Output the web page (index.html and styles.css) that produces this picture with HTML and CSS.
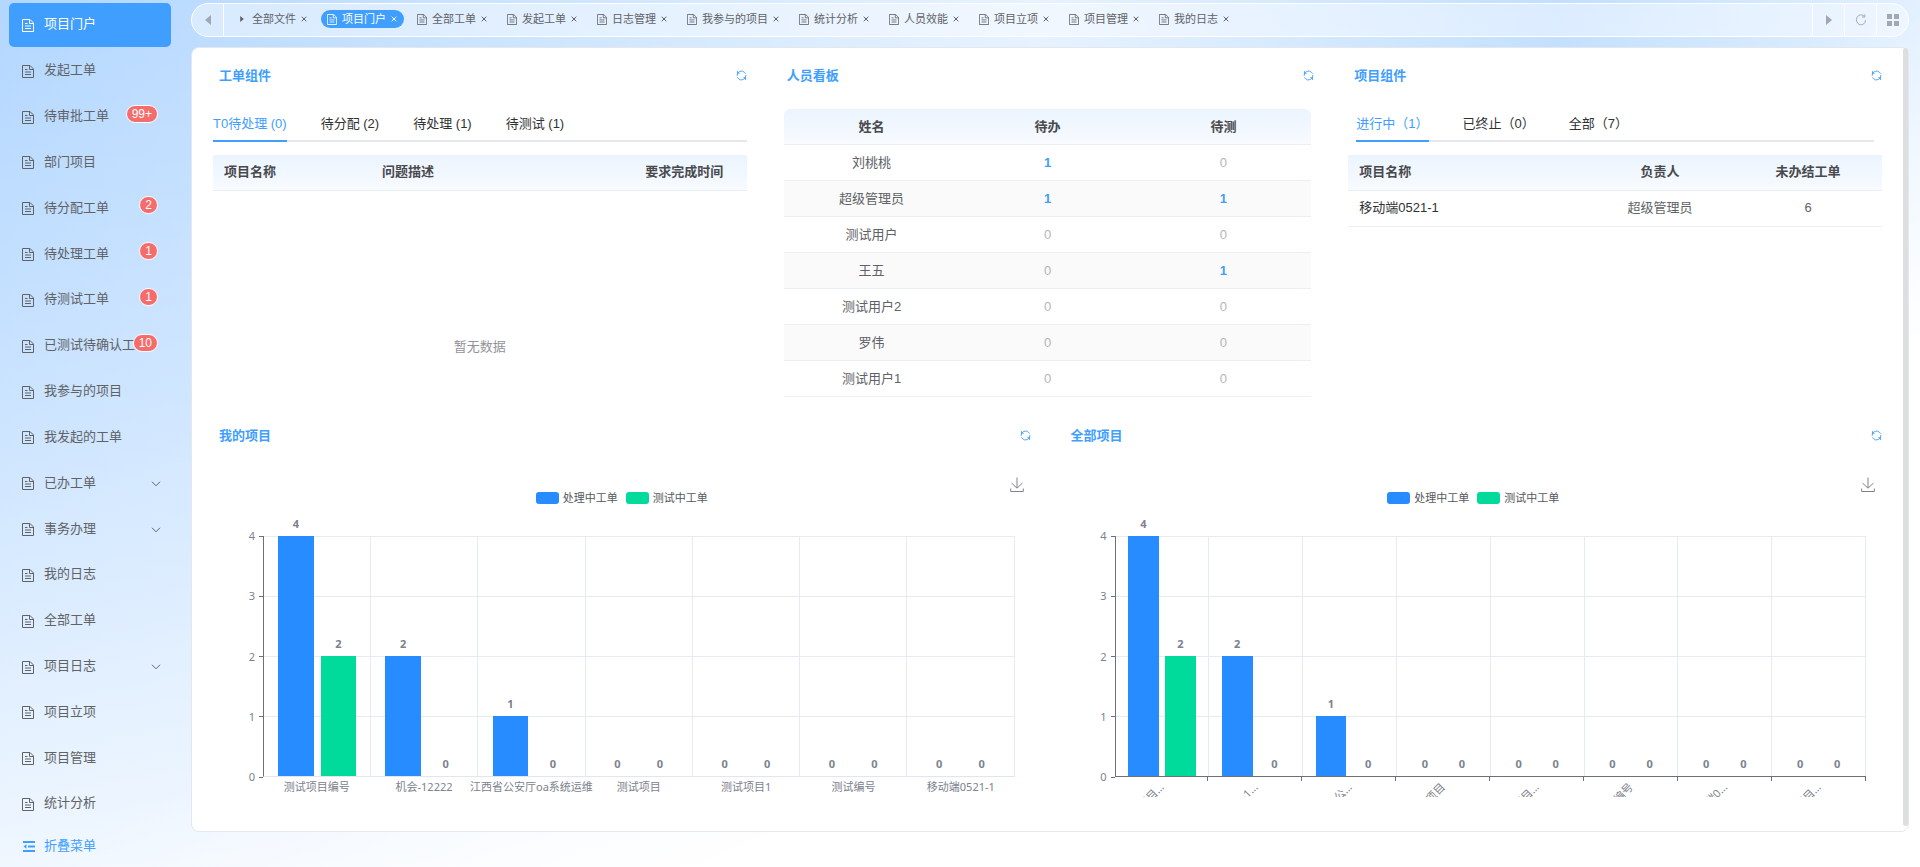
FILE: index.html
```html
<!DOCTYPE html>
<html lang="zh-CN">
<head>
    <meta charset="UTF-8">
    <meta name="viewport" content="width=device-width, initial-scale=1.0">
    <title>项目门户</title>
    <link rel="stylesheet" href="styles.css">
</head>
<body>
    <!-- 图标 -->
    <svg class="sprite" aria-hidden="true">
        <symbol id="i-doc" viewBox="0 0 12 13">
            <path d="M.5 .5H8L11.5 4V12.5H.5Z M7.5 .5V4.5H11.5 M3 4.5H5.5 M3 7H9 M3 9.5H9" fill="none" stroke="currentColor"/>
        </symbol>
        <symbol id="i-refresh" viewBox="0 0 12 12">
            <path d="M1.2 6.5A4.8 4.8 0 0 1 9.5 2.7L10.6 4 M10.8 5.5A4.8 4.8 0 0 1 2.5 9.3L1.4 8 M1.6 1.2V3.6H4 M10.4 10.8V8.4H8" fill="none" stroke="currentColor"/>
        </symbol>
        <symbol id="i-down" viewBox="0 0 10 6">
            <path d="M1 .8L5 4.8L9 .8" fill="none" stroke="currentColor"/>
        </symbol>
        <symbol id="i-close" viewBox="0 0 6 6">
            <path d="M.7 .7L5.3 5.3M5.3 .7L.7 5.3" fill="none" stroke="currentColor"/>
        </symbol>
        <symbol id="i-caret" viewBox="0 0 6 10">
            <path d="M0 0L6 5L0 10Z" fill="currentColor"/>
        </symbol>
        <symbol id="i-fold" viewBox="0 0 12 11">
            <path d="M0 0H12V2H0Z M5 4.5H12V6.5H5Z M0 9H12V11H0Z M3.5 3.2V7.8L.5 5.5Z" fill="currentColor"/>
        </symbol>
        <symbol id="i-reload" viewBox="0 0 12 12">
            <path d="M9.2 2.2A4.6 5 0 1 0 10.6 6.2 M9.8 .3V3H7" fill="none" stroke="currentColor"/>
        </symbol>
        <symbol id="i-grid" viewBox="0 0 12 12">
            <path d="M0 0H5V5H0Z M7 0H12V5H7Z M0 7H5V12H0Z M7 7H12V12H7Z" fill="currentColor"/>
        </symbol>
        <symbol id="i-download" viewBox="0 0 14 16">
            <path d="M7 .5V11 M1.5 6L7 11.2L12.5 6 M.7 11.5V14.5H13.3V11.5" fill="none" stroke="currentColor"/>
        </symbol>
    </svg>

    <aside class="sidebar">
        <nav class="menu">
            <a class="menu-item active" href="#"><svg><use href="#i-doc"/></svg><span>项目门户</span></a>
            <a class="menu-item" href="#"><svg><use href="#i-doc"/></svg><span>发起工单</span></a>
            <a class="menu-item" href="#"><svg><use href="#i-doc"/></svg><span>待审批工单</span><em class="badge">99+</em></a>
            <a class="menu-item" href="#"><svg><use href="#i-doc"/></svg><span>部门项目</span></a>
            <a class="menu-item" href="#"><svg><use href="#i-doc"/></svg><span>待分配工单</span><em class="badge">2</em></a>
            <a class="menu-item" href="#"><svg><use href="#i-doc"/></svg><span>待处理工单</span><em class="badge">1</em></a>
            <a class="menu-item" href="#"><svg><use href="#i-doc"/></svg><span>待测试工单</span><em class="badge">1</em></a>
            <a class="menu-item" href="#"><svg><use href="#i-doc"/></svg><span>已测试待确认工...</span><em class="badge">10</em></a>
            <a class="menu-item" href="#"><svg><use href="#i-doc"/></svg><span>我参与的项目</span></a>
            <a class="menu-item" href="#"><svg><use href="#i-doc"/></svg><span>我发起的工单</span></a>
            <a class="menu-item" href="#"><svg><use href="#i-doc"/></svg><span>已办工单</span><svg class="arrow"><use href="#i-down"/></svg></a>
            <a class="menu-item" href="#"><svg><use href="#i-doc"/></svg><span>事务办理</span><svg class="arrow"><use href="#i-down"/></svg></a>
            <a class="menu-item" href="#"><svg><use href="#i-doc"/></svg><span>我的日志</span></a>
            <a class="menu-item" href="#"><svg><use href="#i-doc"/></svg><span>全部工单</span></a>
            <a class="menu-item" href="#"><svg><use href="#i-doc"/></svg><span>项目日志</span><svg class="arrow"><use href="#i-down"/></svg></a>
            <a class="menu-item" href="#"><svg><use href="#i-doc"/></svg><span>项目立项</span></a>
            <a class="menu-item" href="#"><svg><use href="#i-doc"/></svg><span>项目管理</span></a>
            <a class="menu-item" href="#"><svg><use href="#i-doc"/></svg><span>统计分析</span></a>
        </nav>
        <button class="fold" type="button"><svg><use href="#i-fold"/></svg><span>折叠菜单</span></button>
    </aside>

    <main class="main">
        <!-- 页签栏 -->
        <div class="tabbar">
            <button class="bar-btn prev" type="button" aria-label="向左"><svg class="flip"><use href="#i-caret"/></svg></button>
            <nav class="page-tabs">
                <a class="page-tab" href="#"><svg class="small"><use href="#i-caret"/></svg><span>全部文件</span><svg class="close"><use href="#i-close"/></svg></a>
                <a class="page-tab active" href="#"><svg><use href="#i-doc"/></svg><span>项目门户</span><svg class="close"><use href="#i-close"/></svg></a>
                <a class="page-tab" href="#"><svg><use href="#i-doc"/></svg><span>全部工单</span><svg class="close"><use href="#i-close"/></svg></a>
                <a class="page-tab" href="#"><svg><use href="#i-doc"/></svg><span>发起工单</span><svg class="close"><use href="#i-close"/></svg></a>
                <a class="page-tab" href="#"><svg><use href="#i-doc"/></svg><span>日志管理</span><svg class="close"><use href="#i-close"/></svg></a>
                <a class="page-tab" href="#"><svg><use href="#i-doc"/></svg><span>我参与的项目</span><svg class="close"><use href="#i-close"/></svg></a>
                <a class="page-tab" href="#"><svg><use href="#i-doc"/></svg><span>统计分析</span><svg class="close"><use href="#i-close"/></svg></a>
                <a class="page-tab" href="#"><svg><use href="#i-doc"/></svg><span>人员效能</span><svg class="close"><use href="#i-close"/></svg></a>
                <a class="page-tab" href="#"><svg><use href="#i-doc"/></svg><span>项目立项</span><svg class="close"><use href="#i-close"/></svg></a>
                <a class="page-tab" href="#"><svg><use href="#i-doc"/></svg><span>项目管理</span><svg class="close"><use href="#i-close"/></svg></a>
                <a class="page-tab" href="#"><svg><use href="#i-doc"/></svg><span>我的日志</span><svg class="close"><use href="#i-close"/></svg></a>
            </nav>
            <button class="bar-btn" type="button" aria-label="向右"><svg class="caret"><use href="#i-caret"/></svg></button>
            <button class="bar-btn" type="button" aria-label="刷新"><svg><use href="#i-reload"/></svg></button>
            <button class="bar-btn" type="button" aria-label="更多"><svg><use href="#i-grid"/></svg></button>
        </div>

        <div class="card">
            <div class="row row-top">
                <section class="panel">
                    <header class="panel-head">
                        <h2>工单组件</h2>
                        <button class="refresh" type="button" aria-label="刷新"><svg><use href="#i-refresh"/></svg></button>
                    </header>
                    <div class="tabs">
                        <button class="tab active" type="button">T0待处理 (0)</button>
                        <button class="tab" type="button">待分配 (2)</button>
                        <button class="tab" type="button">待处理 (1)</button>
                        <button class="tab" type="button">待测试 (1)</button>
                    </div>
                    <table class="orders">
                        <thead>
                            <tr><th class="col-name">项目名称</th><th>问题描述</th><th class="col-time">要求完成时间</th></tr>
                        </thead>
                    </table>
                    <p class="empty">暂无数据</p>
                </section>

                <section class="panel">
                    <header class="panel-head">
                        <h2>人员看板</h2>
                        <button class="refresh" type="button" aria-label="刷新"><svg><use href="#i-refresh"/></svg></button>
                    </header>
                    <div class="board">
                        <table class="staff">
                            <thead>
                                <tr><th>姓名</th><th>待办</th><th>待测</th></tr>
                            </thead>
                            <tbody>
                                <tr><td>刘桃桃</td><td class="num">1</td><td class="zero">0</td></tr>
                                <tr><td>超级管理员</td><td class="num">1</td><td class="num">1</td></tr>
                                <tr><td>测试用户</td><td class="zero">0</td><td class="zero">0</td></tr>
                                <tr><td>王五</td><td class="zero">0</td><td class="num">1</td></tr>
                                <tr><td>测试用户2</td><td class="zero">0</td><td class="zero">0</td></tr>
                                <tr><td>罗伟</td><td class="zero">0</td><td class="zero">0</td></tr>
                                <tr><td>测试用户1</td><td class="zero">0</td><td class="zero">0</td></tr>
                            </tbody>
                        </table>
                    </div>
                </section>

                <section class="panel">
                    <header class="panel-head">
                        <h2>项目组件</h2>
                        <button class="refresh" type="button" aria-label="刷新"><svg><use href="#i-refresh"/></svg></button>
                    </header>
                    <div class="tabs inset">
                        <button class="tab active" type="button">进行中（1）</button>
                        <button class="tab" type="button">已终止（0）</button>
                        <button class="tab" type="button">全部（7）</button>
                    </div>
                    <table class="projects">
                        <thead>
                            <tr><th>项目名称</th><th class="col-owner">负责人</th><th class="col-count">未办结工单</th></tr>
                        </thead>
                        <tbody>
                            <tr><td class="name">移动端0521-1</td><td>超级管理员</td><td>6</td></tr>
                        </tbody>
                    </table>
                </section>
            </div>

            <div class="row">
                <section class="panel">
                    <header class="panel-head">
                        <h2>我的项目</h2>
                        <button class="refresh" type="button" aria-label="刷新"><svg><use href="#i-refresh"/></svg></button>
                    </header>
                    <div class="chart">
                        <button class="download" type="button" aria-label="下载"><svg><use href="#i-download"/></svg></button>
                        <div class="legend">
                            <span class="key blue"></span><span>处理中工单</span>
                            <span class="key green"></span><span>测试中工单</span>
                        </div>
                        <div class="chart-body">
                            <div class="y-axis"><span>4</span><span>3</span><span>2</span><span>1</span><span>0</span></div>
                            <div class="plot">
                                <div class="cat">
                                    <div class="bar blue"><b>4</b><i style="height: 100%"></i></div>
                                    <div class="bar green"><b>2</b><i style="height: 50%"></i></div>
                                </div>
                                <div class="cat">
                                    <div class="bar blue"><b>2</b><i style="height: 50%"></i></div>
                                    <div class="bar green"><b>0</b><i style="height: 0%"></i></div>
                                </div>
                                <div class="cat">
                                    <div class="bar blue"><b>1</b><i style="height: 25%"></i></div>
                                    <div class="bar green"><b>0</b><i style="height: 0%"></i></div>
                                </div>
                                <div class="cat"><div class="bar blue"><b>0</b></div><div class="bar green"><b>0</b></div></div>
                                <div class="cat"><div class="bar blue"><b>0</b></div><div class="bar green"><b>0</b></div></div>
                                <div class="cat"><div class="bar blue"><b>0</b></div><div class="bar green"><b>0</b></div></div>
                                <div class="cat"><div class="bar blue"><b>0</b></div><div class="bar green"><b>0</b></div></div>
                            </div>
                        </div>
                        <div class="x-axis">
                            <div><span>测试项目编号</span></div>
                            <div><span>机会-12222</span></div>
                            <div><span>江西省公安厅oa系统运维</span></div>
                            <div><span>测试项目</span></div>
                            <div><span>测试项目1</span></div>
                            <div><span>测试编号</span></div>
                            <div><span>移动端0521-1</span></div>
                        </div>
                    </div>
                </section>

                <section class="panel">
                    <header class="panel-head">
                        <h2>全部项目</h2>
                        <button class="refresh" type="button" aria-label="刷新"><svg><use href="#i-refresh"/></svg></button>
                    </header>
                    <div class="chart">
                        <button class="download" type="button" aria-label="下载"><svg><use href="#i-download"/></svg></button>
                        <div class="legend">
                            <span class="key blue"></span><span>处理中工单</span>
                            <span class="key green"></span><span>测试中工单</span>
                        </div>
                        <div class="chart-body">
                            <div class="y-axis"><span>4</span><span>3</span><span>2</span><span>1</span><span>0</span></div>
                            <div class="plot lined">
                                <div class="cat">
                                    <div class="bar blue"><b>4</b><i style="height: 100%"></i></div>
                                    <div class="bar green"><b>2</b><i style="height: 50%"></i></div>
                                </div>
                                <div class="cat">
                                    <div class="bar blue"><b>2</b><i style="height: 50%"></i></div>
                                    <div class="bar green"><b>0</b><i style="height: 0%"></i></div>
                                </div>
                                <div class="cat">
                                    <div class="bar blue"><b>1</b><i style="height: 25%"></i></div>
                                    <div class="bar green"><b>0</b><i style="height: 0%"></i></div>
                                </div>
                                <div class="cat"><div class="bar blue"><b>0</b></div><div class="bar green"><b>0</b></div></div>
                                <div class="cat"><div class="bar blue"><b>0</b></div><div class="bar green"><b>0</b></div></div>
                                <div class="cat"><div class="bar blue"><b>0</b></div><div class="bar green"><b>0</b></div></div>
                                <div class="cat"><div class="bar blue"><b>0</b></div><div class="bar green"><b>0</b></div></div>
                                <div class="cat"><div class="bar blue"><b>0</b></div><div class="bar green"><b>0</b></div></div>
                            </div>
                        </div>
                        <div class="x-axis rotated">
                            <div><span>测试项目...</span></div>
                            <div><span>机会-1...</span></div>
                            <div><span>江西省公...</span></div>
                            <div><span>测试项目</span></div>
                            <div><span>测试项目...</span></div>
                            <div><span>测试编号</span></div>
                            <div><span>移动端0...</span></div>
                            <div><span>测试项目...</span></div>
                        </div>
                    </div>
                </section>
            </div>
            <div class="scrollbar"></div>
        </div>
    </main>
</body>
</html>
```
FILE: styles.css
```css
* {
    box-sizing: border-box;
    margin: 0;
    padding: 0;
}

body {
    display: flex;
    height: 100vh;
    overflow: hidden;
    font-family: "Liberation Sans", "Noto Sans CJK SC", sans-serif;
    font-size: 13px;
    line-height: 16px;
    color: #606266;
    background:
        linear-gradient(to bottom right, rgba(255, 255, 255, 0) 50%, #fff 70%),
        linear-gradient(to bottom, rgba(255, 255, 255, 0), rgba(255, 255, 255, 0.3) 45%, rgba(255, 255, 255, 0.8)),
        linear-gradient(to right, #b3d7ff 0%, #bddcff 12%, #e6f2ff 54%, #c2dfff 81%, #e2f0ff 100%);
}

button {
    border: none;
    background: none;
    font: inherit;
    color: inherit;
    cursor: pointer;
}

a {
    color: inherit;
    text-decoration: none;
}

svg {
    display: block;
    flex: none;
}

.sprite {
    position: absolute;
    width: 0;
    height: 0;
}

/* 左侧菜单 */
.sidebar {
    display: flex;
    flex-direction: column;
    flex: none;
    width: 191px;
    padding: 2px 20px 2px 9px;
}

.menu {
    display: flex;
    flex: 1;
    flex-direction: column;
}

.menu-item {
    position: relative;
    display: flex;
    flex: 1;
    align-items: center;
    gap: 10px;
    margin: 1px 0;
    padding: 0 10px 1px 13px;
    border-radius: 5px;
    white-space: nowrap;
}

.menu-item svg {
    width: 12px;
    height: 13px;
    margin-top: 2px;
}

.menu-item .arrow {
    width: 10px;
    height: 6px;
    margin-left: auto;
}

.menu-item.active {
    color: #fff;
    background: #409eff;
}

.badge {
    position: absolute;
    top: 10px;
    right: 13px;
    min-width: 18px;
    height: 18px;
    padding: 0 5px;
    border: 1px solid #fff;
    border-radius: 9px;
    background: #f56c6c;
    color: #fff;
    font-size: 12px;
    font-style: normal;
    line-height: 16px;
    text-align: center;
}

.fold {
    display: flex;
    align-items: center;
    gap: 9px;
    height: 38px;
    padding-left: 14px;
    color: #409eff;
}

.fold svg {
    width: 12px;
    height: 11px;
}

.main {
    display: flex;
    flex: 1;
    flex-direction: column;
    min-width: 0;
    padding: 3px 11px 35px 0;
}

/* 页签栏 */
.tabbar {
    display: flex;
    flex: none;
    height: 34px;
    margin-bottom: 10px;
    border: 1px solid #fff;
    border-radius: 17px;
    background: rgba(255, 255, 255, 0.42);
}

.bar-btn {
    display: flex;
    align-items: center;
    justify-content: center;
    width: 32px;
    border-left: 1px solid #fff;
    color: #a3a8b0;
}

.bar-btn svg {
    width: 12px;
    height: 12px;
}

.bar-btn .caret,
.bar-btn .flip {
    width: 6px;
    height: 10px;
}

.bar-btn .flip {
    transform: rotate(180deg);
}

.bar-btn.prev {
    border-left: none;
    border-right: 1px solid #fff;
}

.page-tabs {
    display: flex;
    flex: 1;
    align-items: center;
    gap: 7px;
    padding: 0 7px 2px;
    overflow: hidden;
    font-size: 11px;
}

.page-tab {
    display: flex;
    flex: none;
    align-items: center;
    gap: 5px;
    height: 18px;
    padding: 0 7px 0 6px;
    border-radius: 9px;
}

.page-tab svg {
    width: 10px;
    height: 11px;
}

.page-tab .small {
    height: 6px;
}

.page-tab .close {
    width: 6px;
    height: 6px;
}

.page-tab.active {
    color: #fff;
    background: #409eff;
}

/* 内容区 */
.card {
    position: relative;
    flex: 1;
    padding: 0 26px 0 21px;
    border: 1px solid #e4e7ed;
    border-radius: 8px;
    background: #fff;
}

.scrollbar {
    position: absolute;
    top: 0;
    right: 0;
    bottom: 5px;
    width: 5px;
    border-radius: 3px;
    background: #dddee0;
}

.row {
    display: flex;
    gap: 34px;
}

.row-top {
    min-height: 360px;
}

.panel {
    flex: 1;
    min-width: 0;
}

.panel-head {
    display: flex;
    align-items: center;
    justify-content: space-between;
    height: 55px;
    padding: 0 0 0 6px;
    color: #409eff;
}

.panel-head h2 {
    font-size: 13px;
    font-weight: bold;
}

.refresh svg {
    width: 11px;
    height: 11px;
}

.tabs {
    display: flex;
    gap: 34px;
    margin: 4px 0 13px;
    border-bottom: 2px solid #e4e7ed;
    color: #303133;
}

.tabs.inset {
    margin-left: 8px;
    margin-right: 8px;
}

.tab {
    height: 35px;
    margin-bottom: -2px;
    padding-top: 1px;
    border-bottom: 2px solid transparent;
    white-space: nowrap;
}

.tab.active {
    color: #409eff;
    border-color: #409eff;
}

/* 表格 */
table {
    width: 100%;
    table-layout: fixed;
    border-collapse: separate;
    border-spacing: 0;
}

thead tr {
    background: linear-gradient(to bottom, #ebf4ff, #f8fbff);
}

th,
td {
    height: 36px;
    padding: 0 11px 2px;
    border-bottom: 1px solid #ebeef5;
    text-align: center;
    white-space: nowrap;
}

th {
    color: #48494c;
    font-weight: bold;
}

.orders th,
.projects th:first-child,
.projects td:first-child {
    text-align: left;
}

.orders .col-time {
    width: 125px;
    text-align: center;
}

.col-name {
    width: 158px;
}

.col-owner,
.col-count {
    width: 148px;
}

.projects .name {
    color: #303133;
}

.board {
    padding: 6px 3px 0;
}

.staff {
    overflow: hidden;
    border-radius: 6px 6px 0 0;
}

.staff th,
.staff td {
    padding-bottom: 0;
}

.staff tbody tr:nth-child(even) {
    background: #fafafa;
}

.num {
    color: #409eff;
    font-weight: bold;
}

.zero {
    color: #b4b6ba;
}

.empty {
    padding-top: 148px;
    color: #909399;
    text-align: center;
}

/* 柱状图 */
.chart {
    position: relative;
    overflow: hidden;
    padding: 27px 16px 0 0;
    color: #7c818c;
    font-family: "Noto Sans", "Noto Sans CJK SC", sans-serif;
    font-size: 11px;
}

.download {
    position: absolute;
    top: 14px;
    right: 7px;
    color: #808388;
}

.download svg {
    width: 14px;
    height: 16px;
}

.legend {
    display: flex;
    align-items: center;
    justify-content: center;
    gap: 4px;
    margin-bottom: 30px;
    padding-left: 16px;
    color: #55585e;
}

.key {
    width: 23px;
    height: 12px;
    border-radius: 3px;
}

.key.green {
    margin-left: 4px;
}

.blue {
    --bar: #268cff;
}

.green {
    --bar: #00db9c;
}

.key,
.bar i {
    background: var(--bar);
}

.chart-body {
    display: flex;
    height: 241px;
}

.y-axis {
    display: flex;
    flex: none;
    flex-direction: column;
    justify-content: space-between;
    width: 50px;
    margin: -8px 0;
}

.y-axis span {
    display: flex;
    align-items: center;
    justify-content: flex-end;
    gap: 4px;
}

.y-axis span::after {
    content: "";
    width: 4px;
    height: 1px;
    background: #6e7079;
}

.plot {
    display: flex;
    flex: 1;
    border-left: 1px solid #6e7079;
    border-bottom: 1px solid #e0e6f1;
    background: linear-gradient(#e6eaf3 1px, transparent 1px) 0 0 / 100% 60px;
}

.plot.lined {
    border-bottom-color: #6e7079;
}

.cat {
    display: grid;
    flex: 1;
    grid-template-columns: 2fr 5fr 1fr 5fr 2fr;
    border-right: 1px solid #e6eaf3;
}

.bar {
    display: flex;
    flex-direction: column;
    justify-content: flex-end;
    grid-column: 2;
    height: 240px;
    text-align: center;
}

.bar.green {
    grid-column: 4;
}

.bar b {
    flex: none;
    margin-bottom: 4px;
}

.bar i {
    flex: none;
}

.x-axis {
    display: flex;
    height: 20px;
    margin-left: 50px;
}

.x-axis div {
    display: flex;
    flex: 1;
    justify-content: center;
    min-width: 0;
    padding-top: 2px;
    white-space: nowrap;
}

/* 斜排标签，每格右侧带刻度 */
.x-axis.rotated div {
    position: relative;
    padding-top: 0;
    background: linear-gradient(#6e7079, #6e7079) right top / 1px 4px no-repeat;
}

.rotated span {
    position: absolute;
    top: 0;
    right: 50%;
    transform: rotate(-45deg);
    transform-origin: right center;
}
```
